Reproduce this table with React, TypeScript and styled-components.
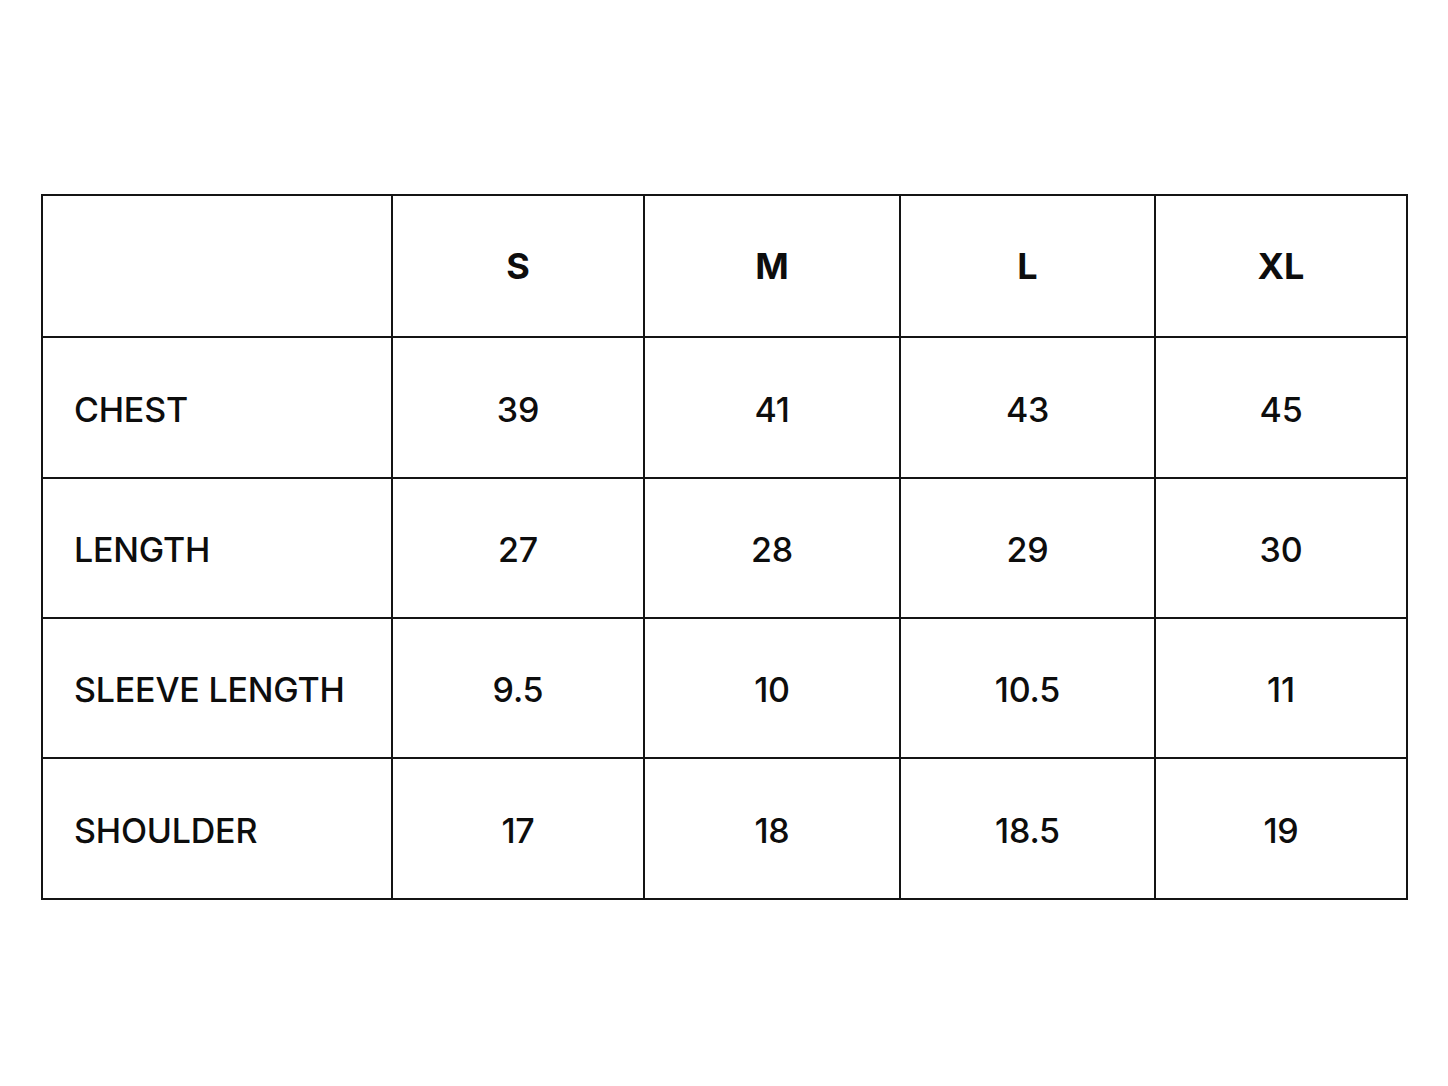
import styled, { createGlobalStyle } from 'styled-components'

const GlobalStyle = createGlobalStyle`
  html, body {
    margin: 0;
    padding: 0;
    background: #ffffff;
  }
  body {
    font-family: Inter, "Liberation Sans", Arial, sans-serif;
    color: #111;
  }
`

const Page = styled.div`
  width: 1448px;
  height: 1086px;
  padding: 194px 0 0 41px;
  box-sizing: border-box;
`

const Grid = styled.div`
  display: grid;
  grid-template-columns: 348px 250px 254px 253px 250px;
  grid-template-rows: 140px 139px 138px 138px 139px;
  gap: 2px;
  padding: 2px;
  width: max-content;
  background: #141414;
`

const Cell = styled.div<{ $label?: boolean; $head?: boolean }>`
  background: #fff;
  display: flex;
  align-items: center;
  justify-content: ${(p) => (p.$label ? 'flex-start' : 'center')};
  padding-left: ${(p) => (p.$label ? '31px' : '0')};
  padding-top: ${(p) => (p.$head ? '0' : '3px')};
  font-size: ${(p) => (p.$head ? '36px' : '34px')};
  font-weight: ${(p) => (p.$head ? 700 : 500)};
  letter-spacing: ${(p) => (p.$head ? '0' : '-0.2px')};
  color: #0d0d0d;
`

const sizes = ['S', 'M', 'L', 'XL']

const rows: Array<[string, string[]]> = [
  ['CHEST', ['39', '41', '43', '45']],
  ['LENGTH', ['27', '28', '29', '30']],
  ['SLEEVE LENGTH', ['9.5', '10', '10.5', '11']],
  ['SHOULDER', ['17', '18', '18.5', '19']],
]

export default function App() {
  return (
    <>
      <GlobalStyle />
      <Page>
        <Grid>
          <Cell $label />
          {sizes.map((s) => (
            <Cell key={s} $head>
              {s}
            </Cell>
          ))}
          {rows.map(([name, values]) =>
            [
              <Cell key={name} $label>
                {name}
              </Cell>,
            ].concat(values.map((v, i) => <Cell key={name + i}>{v}</Cell>))
          )}
        </Grid>
      </Page>
    </>
  )
}
